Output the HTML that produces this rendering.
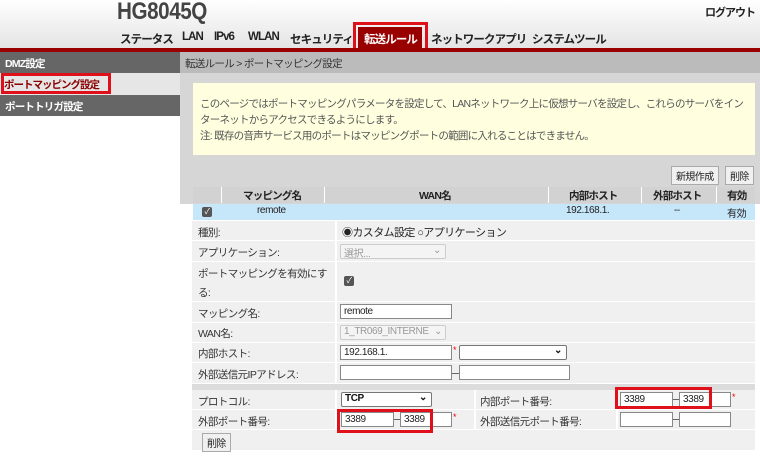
<!DOCTYPE html>
<html><head><meta charset="utf-8"><style>
*{box-sizing:border-box;margin:0;padding:0}
body{width:760px;height:462px;overflow:hidden;background:#fff;font-family:"Liberation Sans","Noto Sans CJK JP",sans-serif;font-size:11px;color:#333;position:relative;letter-spacing:-0.4px}
.a{position:absolute;white-space:nowrap}
.hdr{left:0;top:0;width:760px;height:48px;background:linear-gradient(#ffffff,#e4e4e4)}
.bar{left:0;top:48px;width:760px;height:4px;background:#990000}
.nav{top:31px;font-weight:bold;font-size:11.5px;color:#222;letter-spacing:-0.9px}
.side{left:0;width:180px;height:21px;color:#fff;font-weight:bold;font-size:10.5px;padding:4px 5px;background:#666;letter-spacing:-0.8px}
.inp{position:absolute;background:#fff;border:1px solid #888;height:15px;font-size:10px;padding:1px 3px;color:#222;white-space:nowrap;overflow:hidden}
.sel{position:absolute;background:#fff;border:1px solid #777;border-radius:2px;height:15px;font-size:10px;padding:0 3px;color:#111;white-space:nowrap;overflow:hidden}
.dis{background:#f4f4f4;border-color:#ccc;color:#999}
.row{position:absolute;left:192px;width:563px;background:#f0f0f0;border-bottom:1px solid #fff}
.lab{position:absolute;font-size:10.5px;color:#333;white-space:nowrap;letter-spacing:-0.6px}
.red{position:absolute;border:3px solid #e0101a}
.btn{position:absolute;background:#f0f0f0;border:1px solid #aaa;font-size:10px;padding:1px 4px;color:#222;letter-spacing:-0.6px}
.star{position:absolute;color:#e00;font-size:9px}
</style></head><body>
<div class="a hdr"></div>
<div class="a" style="left:117px;top:-2px;font-size:24px;font-weight:bold;color:#444;letter-spacing:-0.5px;transform:scaleX(0.86);transform-origin:left">HG8045Q</div>
<div class="a" style="left:705px;top:4px;font-size:11px;font-weight:bold;color:#222;letter-spacing:-1px">ログアウト</div>
<div class="a nav" style="left:120px">ステータス</div>
<div class="a nav" style="left:182px">LAN</div>
<div class="a nav" style="left:214px">IPv6</div>
<div class="a nav" style="left:248px">WLAN</div>
<div class="a nav" style="left:290px">セキュリティ</div>
<div class="a" style="left:358px;top:27px;width:64px;height:25px;background:#990000"></div>
<div class="a nav" style="left:364px;color:#fff">転送ルール</div>
<div class="red" style="left:353px;top:22px;width:75px;height:36px"></div>
<div class="a nav" style="left:431px">ネットワークアプリ</div>
<div class="a nav" style="left:532px">システムツール</div>
<div class="a bar"></div>

<div class="a side" style="top:52px">DMZ設定</div>
<div class="a" style="left:0;top:73px;width:180px;height:22px;background:#e6e6e6"></div>
<div class="a" style="left:4px;top:77px;font-size:10.5px;font-weight:bold;color:#8b0000;letter-spacing:-1px">ポートマッピング設定</div>
<div class="red" style="left:1px;top:73px;width:110px;height:21px"></div>
<div class="a side" style="top:95px">ポートトリガ設定</div>

<div class="a" style="left:180px;top:52px;width:580px;height:152px;background:#d6d6d6"></div>
<div class="a" style="left:180px;top:52px;width:580px;height:21px;background:#bbbbbb"></div>
<div class="a" style="left:185px;top:56px;font-size:10.5px;color:#333;letter-spacing:-0.7px">転送ルール &gt; ポートマッピング設定</div>
<div class="a" style="left:193px;top:83px;width:562px;height:72px;background:#ffffe0;padding:13px 7px;font-size:10.5px;line-height:16px;color:#555;white-space:normal;letter-spacing:-0.75px">このページではポートマッピングパラメータを設定して、LANネットワーク上に仮想サーバを設定し、これらのサーバをインターネットからアクセスできるようにします。<br>注: 既存の音声サービス用のポートはマッピングポートの範囲に入れることはできません。</div>
<div class="btn" style="left:671px;top:166px">新規作成</div>
<div class="btn" style="left:725px;top:166px">削除</div>

<div class="a" style="left:193px;top:187px;width:562px;height:16px;background:#d2d2d2;font-weight:bold;font-size:10.5px;color:#222;letter-spacing:-0.8px">
<span class="a" style="left:28px;top:0;width:1px;height:16px;background:#fff"></span>
<span class="a" style="left:131px;top:0;width:1px;height:16px;background:#fff"></span>
<span class="a" style="left:355px;top:0;width:1px;height:16px;background:#fff"></span>
<span class="a" style="left:448px;top:0;width:1px;height:16px;background:#fff"></span>
<span class="a" style="left:523px;top:0;width:1px;height:16px;background:#fff"></span>
<span class="a" style="left:50px;top:1px">マッピング名</span>
<span class="a" style="left:226px;top:1px">WAN名</span>
<span class="a" style="left:376px;top:1px">内部ホスト</span>
<span class="a" style="left:460px;top:1px">外部ホスト</span>
<span class="a" style="left:534px;top:1px">有効</span>
</div>
<div class="a" style="left:193px;top:204px;width:562px;height:16px;background:#c6e6fa;font-size:10px;color:#222">
<span class="a" style="left:9px;top:3px;width:10px;height:10px;background:#555;border-radius:2px;color:#fff;font-size:8px;line-height:10px;text-align:center">✓</span>
<span class="a" style="left:64px;top:1px">remote</span>
<span class="a" style="left:373px;top:1px">192.168.1.</span>
<span class="a" style="left:481px;top:1px">--</span>
<span class="a" style="left:534px;top:1px">有効</span>
</div>

<div class="row" style="top:221px;height:20px"></div>
<div class="row" style="top:241px;height:21px"></div>
<div class="row" style="top:262px;height:40px"></div>
<div class="row" style="top:302px;height:21px"></div>
<div class="row" style="top:323px;height:20px"></div>
<div class="row" style="top:343px;height:20px"></div>
<div class="row" style="top:363px;height:21px"></div>
<div class="a" style="left:192px;top:384px;width:563px;height:6px;background:#dcdcdc"></div>
<div class="row" style="top:390px;height:20px"></div>
<div class="row" style="top:410px;height:20px"></div>
<div class="row" style="top:430px;height:21px"></div>
<div class="a" style="left:335px;top:221px;width:2px;height:163px;background:#fff"></div>
<div class="a" style="left:335px;top:390px;width:2px;height:40px;background:#fff"></div>
<div class="a" style="left:474px;top:390px;width:2px;height:40px;background:#fff"></div>
<div class="a" style="left:616px;top:390px;width:2px;height:40px;background:#fff"></div>

<div class="lab" style="left:198px;top:225px">種別:</div>
<div class="lab" style="left:342px;top:224px;font-size:11px;color:#222">◉カスタム設定 ○アプリケーション</div>
<div class="lab" style="left:198px;top:245px">アプリケーション:</div>
<div class="sel dis" style="left:340px;top:244px;width:106px">選択...<span style="position:absolute;right:4px;top:0">⌄</span></div>
<div class="lab" style="left:198px;top:265px;line-height:19px">ポートマッピングを有効にす<br>る:</div>
<span class="a" style="left:344px;top:276px;width:10px;height:10px;background:#555;border-radius:2px;color:#fff;font-size:8px;line-height:10px;text-align:center">✓</span>
<div class="lab" style="left:198px;top:306px">マッピング名:</div>
<div class="inp" style="left:340px;top:304px;width:112px">remote</div>
<div class="lab" style="left:198px;top:326px">WAN名:</div>
<div class="sel dis" style="left:340px;top:325px;width:106px">1_TR069_INTERNE<span style="position:absolute;right:3px;top:0;background:#f4f4f4">⌄</span></div>
<div class="lab" style="left:198px;top:346px">内部ホスト:</div>
<div class="inp" style="left:340px;top:345px;width:112px">192.168.1.</div>
<div class="star" style="left:453px;top:345px">*</div>
<div class="sel" style="left:459px;top:345px;width:108px"><span style="position:absolute;right:4px;top:-1px;font-weight:bold">⌄</span></div>
<div class="lab" style="left:198px;top:367px">外部送信元IPアドレス:</div>
<div class="inp" style="left:340px;top:365px;width:112px"></div>
<div class="a" style="left:452px;top:373px;width:7px;height:1px;background:#666"></div>
<div class="inp" style="left:459px;top:365px;width:111px"></div>

<div class="lab" style="left:198px;top:394px">プロトコル:</div>
<div class="sel" style="left:341px;top:392px;width:91px;font-weight:bold">TCP<span style="position:absolute;right:4px;top:-1px">⌄</span></div>
<div class="lab" style="left:480px;top:394px">内部ポート番号:</div>
<div class="inp" style="left:620px;top:392px;width:53px">3389</div>
<div class="a" style="left:673px;top:399px;width:6px;height:1px;background:#666"></div>
<div class="inp" style="left:679px;top:392px;width:52px">3389</div>
<div class="star" style="left:732px;top:392px">*</div>
<div class="red" style="left:615px;top:387px;width:97px;height:22px"></div>

<div class="lab" style="left:198px;top:414px">外部ポート番号:</div>
<div class="inp" style="left:341px;top:412px;width:53px">3389</div>
<div class="a" style="left:394px;top:419px;width:6px;height:1px;background:#666"></div>
<div class="inp" style="left:400px;top:412px;width:52px">3389</div>
<div class="star" style="left:453px;top:412px">*</div>
<div class="red" style="left:337px;top:409px;width:96px;height:24px"></div>
<div class="lab" style="left:480px;top:414px">外部送信元ポート番号:</div>
<div class="inp" style="left:620px;top:412px;width:53px"></div>
<div class="a" style="left:673px;top:419px;width:6px;height:1px;background:#666"></div>
<div class="inp" style="left:679px;top:412px;width:52px"></div>

<div class="btn" style="left:202px;top:433px">削除</div>
</body></html>
